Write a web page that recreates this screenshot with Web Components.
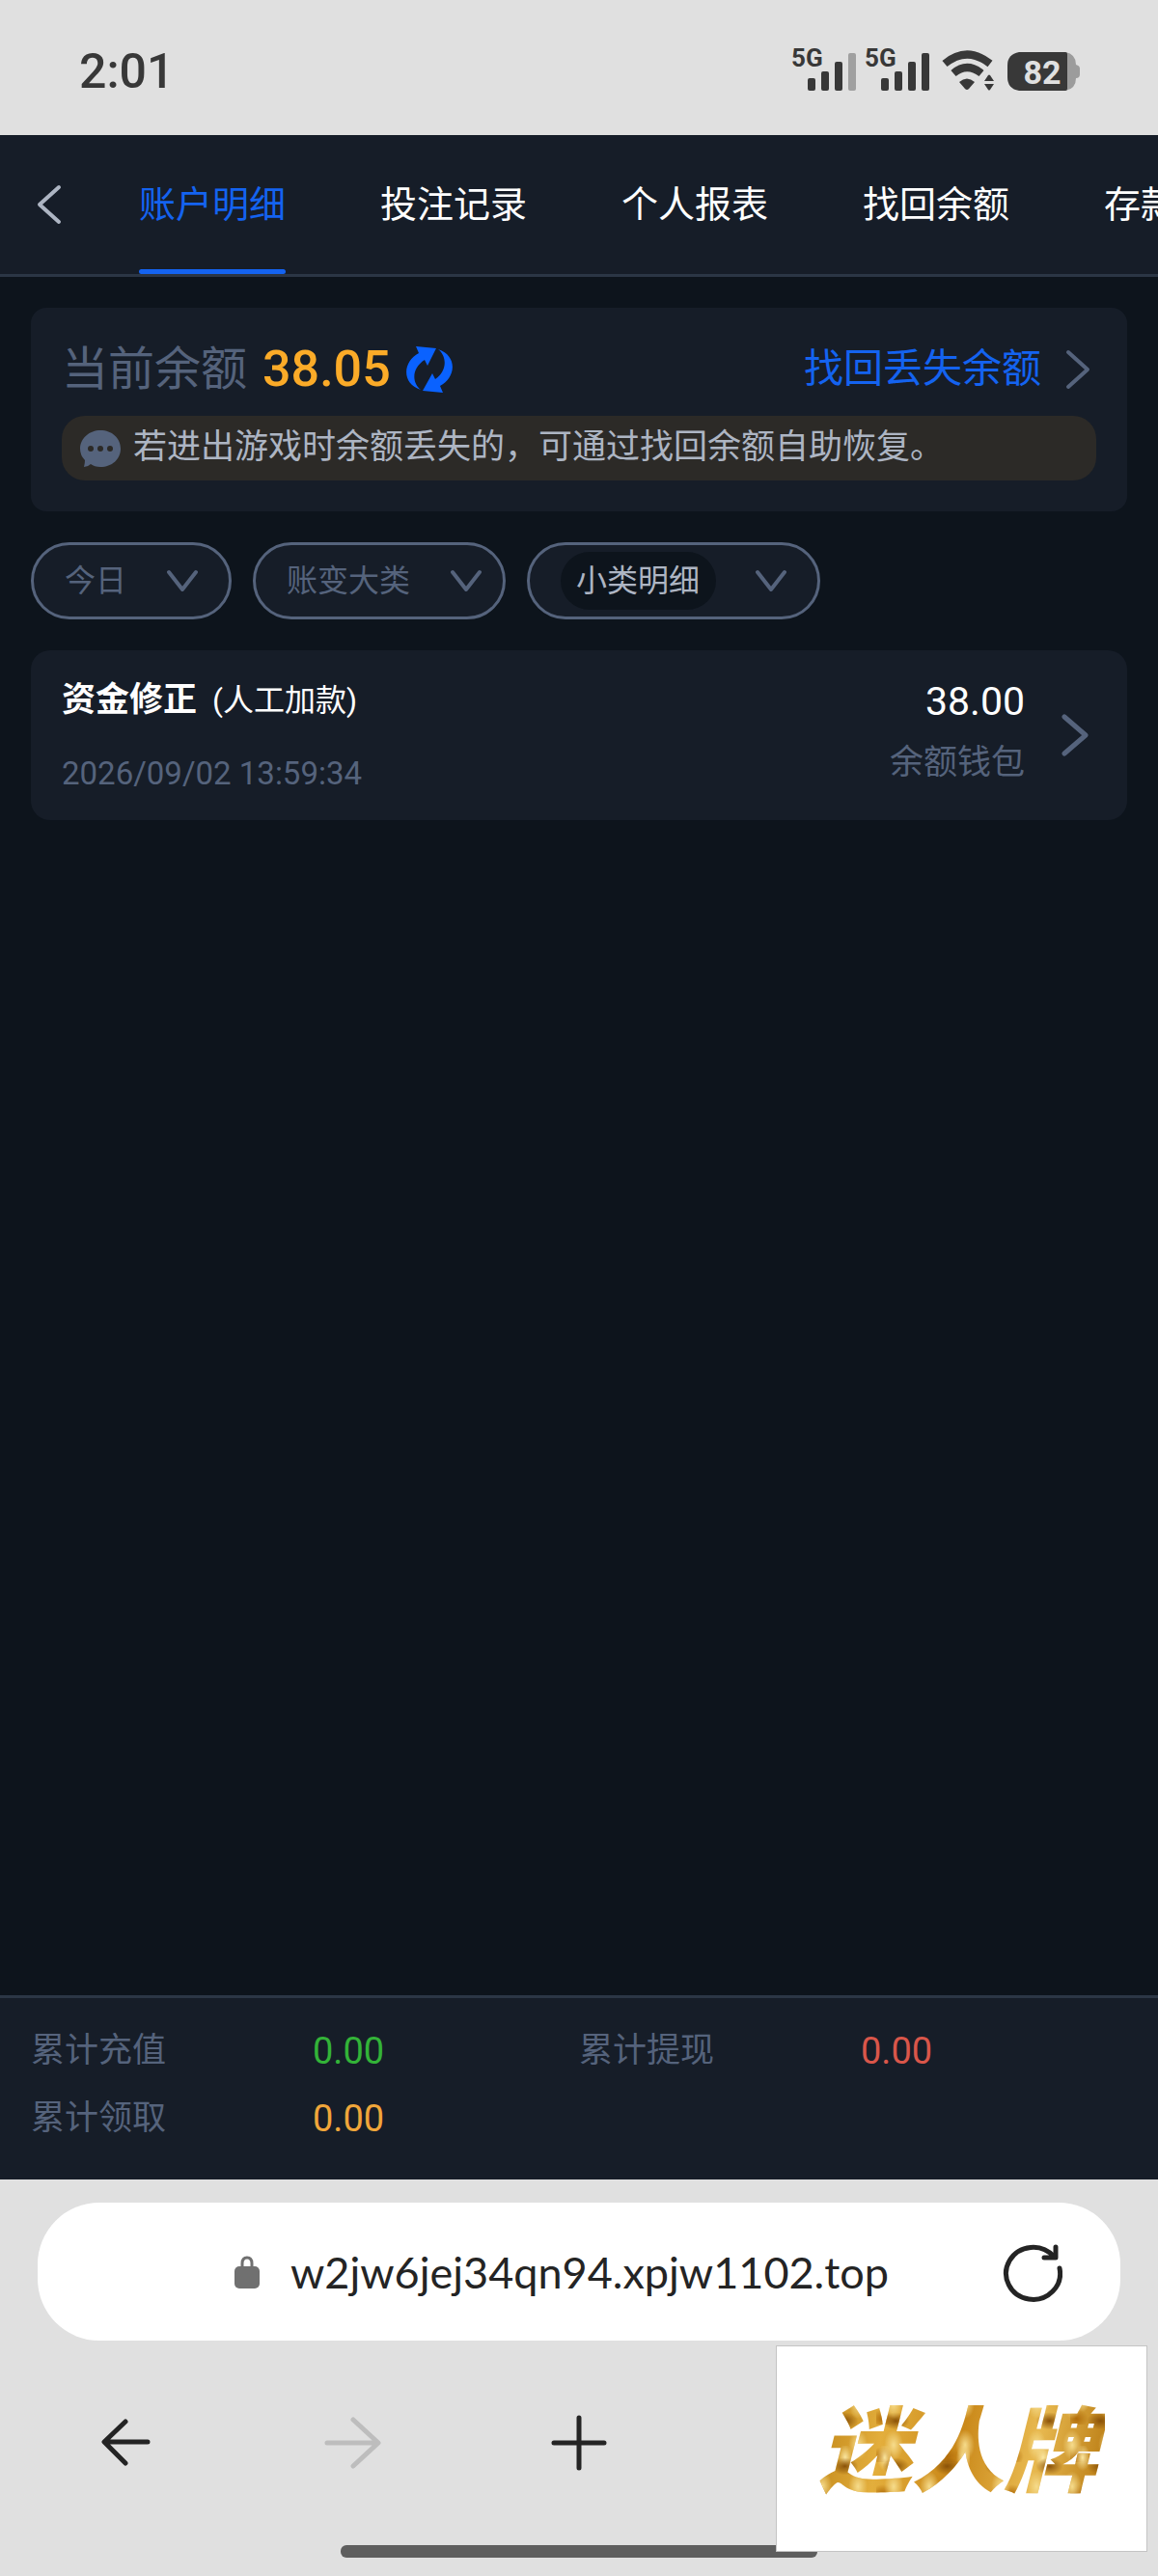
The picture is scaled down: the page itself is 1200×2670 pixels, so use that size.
<!DOCTYPE html>
<html lang="zh-CN">
<head>
<meta charset="utf-8">
<meta name="viewport" content="width=device-width, initial-scale=1">
<title>账户明细</title>
<style>
    :root {
        --page: #0d141c;
        --panel: #161d28;
        --line: #2b3645;
        --muted: #55637c;
        --soft: #adb5c3;
        --brand: #1463f0;
        --chrome: #e0e0e0;
        --ink: #242424;
    }

    body {
        margin: 0;
        background: var(--page);
        font-family: Roboto, "Noto Sans CJK SC", sans-serif;
        line-height: 1.5;
    }
</style>
</head>
<body>
<account-app>
    <status-bar slot="status" time="2:01" battery="82"></status-bar>
    <tab-nav slot="nav"></tab-nav>

    <balance-card amount="38.05">
        若进出游戏时余额丢失的，可通过找回余额自助恢复。
    </balance-card>
    <filter-bar>
        <filter-select label="今日"></filter-select>
        <filter-select label="账变大类" class="tight"></filter-select>
        <filter-select label="小类明细" class="chip"></filter-select>
    </filter-bar>
    <record-item kind="资金修正" note="(人工加款)" time="2026/09/02 13:59:34" amount="38.00" wallet="余额钱包"></record-item>

    <totals-bar slot="totals">
        <total-item label="累计充值" value="0.00" style="--value: #33b338"></total-item>
        <total-item label="累计提现" value="0.00" style="--value: #d9564a"></total-item>
        <total-item label="累计领取" value="0.00" style="--value: #f0a63a"></total-item>
    </totals-bar>
    <browser-bar slot="browser" host="w2jw6jej34qn94.xpjw1102.top">
        <brand-badge>迷人牌</brand-badge>
    </browser-bar>
</account-app>

<script>
class AccountApp extends HTMLElement {
    constructor() {
        super();
        this.attachShadow({ mode: 'open' });
        this.shadowRoot.innerHTML = `
            <style>
                :host {
                    display: flex;
                    flex-direction: column;
                    min-height: 100vh;
                }

                main {
                    flex: 1;
                    display: flex;
                    flex-direction: column;
                    gap: 32px;
                    padding: 32px;
                }
            </style>
            <slot name="status"></slot>
            <slot name="nav"></slot>
            <main><slot></slot></main>
            <slot name="totals"></slot>
            <slot name="browser"></slot>
        `;
    }
}

class SignalIcon extends HTMLElement {
    constructor() {
        super();
        this.attachShadow({ mode: 'open' });
    }

    connectedCallback() {
        const level = Number(this.getAttribute('level'));
        const tops = [31, 24, 14, 5];

        this.shadowRoot.innerHTML = `
            <style>
                :host {
                    display: block;
                    position: relative;
                    color: #383838;
                }

                span {
                    position: absolute;
                    top: 0;
                    left: 0;
                    font-size: 26px;
                    line-height: 20px;
                    font-weight: 700;
                }

                svg { display: block; }
            </style>
            <span>5G</span>
            <svg width="68" height="44" fill="currentColor" aria-hidden="true">
                ${tops.map((top, i) => `
                    <rect x="${17 + i * 14}" y="${top}" width="8" height="${44 - top}" rx="2" opacity="${i < level ? 1 : 0.38}"/>
                `).join('')}
            </svg>
        `;
    }
}

class StatusBar extends HTMLElement {
    constructor() {
        super();
        this.attachShadow({ mode: 'open' });
    }

    connectedCallback() {
        this.shadowRoot.innerHTML = `
            <style>
                :host {
                    display: flex;
                    justify-content: space-between;
                    align-items: center;
                    height: 140px;
                    padding: 4px 80px 0 82px;
                    box-sizing: border-box;
                    background: var(--chrome);
                    color: #383838;
                }

                time {
                    font-size: 50px;
                    font-weight: 500;
                    padding-top: 4px;
                }

                .icons {
                    display: flex;
                    align-items: flex-end;
                    gap: 8px;
                }

                .wifi { margin-left: 4px; }

                .battery {
                    position: relative;
                    width: 76px;
                    height: 40px;
                    margin-left: 4px;
                }

                .battery span {
                    position: absolute;
                    top: 0;
                    left: 0;
                    width: 72px;
                    text-align: center;
                    font-size: 34px;
                    line-height: 42px;
                    font-weight: 700;
                    color: var(--chrome);
                }

                svg { display: block; }
            </style>
            <time>${this.getAttribute('time')}</time>
            <div class="icons">
                <signal-icon level="3"></signal-icon>
                <signal-icon level="4"></signal-icon>
                <svg class="wifi" width="56" height="42" viewBox="0 0 56 42" fill="none" stroke="currentColor" aria-hidden="true">
                    <path d="M3 14Q26 -5 50 14" stroke-width="8"/>
                    <path d="M12 24Q26 12 41 24" stroke-width="8"/>
                    <path d="M18 33Q26 26 34 33L28 40Q26 42 24 40Z" fill="currentColor" stroke="none"/>
                    <path d="M44 32L48 26Q49 25 50 26L54 32ZM44 35L48 41Q49 42 50 41L54 35Z" fill="currentColor" stroke="none"/>
                </svg>
                <div class="battery">
                    <svg width="76" height="40" aria-hidden="true">
                        <path d="M60 0Q71 2 71 13Q75 14 75 17V23Q75 27 71 27Q71 38 60 40Z" fill="#9c9c9c"/>
                        <path d="M12 0H60Q62 0 62 2V38Q62 40 60 40H12Q0 38 0 26V14Q0 2 12 0Z" fill="#383838"/>
                    </svg>
                    <span>${this.getAttribute('battery')}</span>
                </div>
            </div>
        `;
    }
}

class TabNav extends HTMLElement {
    constructor() {
        super();
        this.attachShadow({ mode: 'open' });
        this.tabs = ['账户明细', '投注记录', '个人报表', '找回余额', '存款记录'];
        this.selected = 0;
        this.render();
    }

    connectedCallback() {
        const buttons = this.shadowRoot.querySelectorAll('[role=tab]');
        buttons.forEach(button => {
            button.addEventListener('click', () => {
                buttons.forEach(b => b.setAttribute('aria-selected', b === button));
            });
        });
    }

    render() {
        this.shadowRoot.innerHTML = `
            <style>
                :host {
                    display: flex;
                    height: 147px;
                    box-sizing: border-box;
                    border-bottom: 3px solid var(--line);
                    background: var(--panel);
                }

                button {
                    border: 0;
                    padding: 0;
                    background: none;
                    color: #fff;
                    font: inherit;
                    cursor: pointer;
                }

                .back {
                    flex: none;
                    width: 102px;
                    color: var(--soft);
                }

                .back svg { display: block; margin: 0 auto; }

                .tabs {
                    flex: 1;
                    display: flex;
                    gap: 98px;
                    padding-left: 42px;
                    overflow-x: auto;
                    scrollbar-width: none;
                }

                .tabs button {
                    flex: none;
                    position: relative;
                    font-size: 38px;
                    white-space: nowrap;
                }

                [aria-selected=true] { color: var(--brand); }

                [aria-selected=true]::after {
                    content: "";
                    position: absolute;
                    left: 0;
                    right: 0;
                    bottom: 0;
                    height: 5px;
                    border-radius: 3px;
                    background: var(--brand);
                }
            </style>
            <button class="back" aria-label="返回">
                <svg width="26" height="42" viewBox="0 0 26 42" fill="none" stroke="currentColor" stroke-width="4" stroke-linecap="round" stroke-linejoin="round">
                    <path d="M23 3L3 21L23 39"/>
                </svg>
            </button>
            <div class="tabs" role="tablist">
                ${this.tabs.map((name, i) => `
                    <button role="tab" aria-selected="${i === this.selected}">${name}</button>
                `).join('')}
            </div>
        `;
    }
}

class BalanceCard extends HTMLElement {
    constructor() {
        super();
        this.attachShadow({ mode: 'open' });
    }

    connectedCallback() {
        this.shadowRoot.innerHTML = `
            <style>
                :host {
                    display: block;
                    padding: 28px 32px 32px;
                    border-radius: 16px;
                    background: var(--panel);
                }

                .row {
                    display: flex;
                    align-items: center;
                    height: 72px;
                    margin-bottom: 12px;
                    font-size: 48px;
                    color: var(--muted);
                }

                strong {
                    margin: 0 16px;
                    font-size: 52px;
                    font-weight: 500;
                    color: #fbab28;
                }

                button {
                    border: 0;
                    padding: 0;
                    background: none;
                    color: #0a62ff;
                    cursor: pointer;
                }

                a {
                    display: flex;
                    align-items: center;
                    gap: 24px;
                    margin-left: auto;
                    margin-right: 5px;
                    font-size: 41px;
                    color: var(--brand);
                    text-decoration: none;
                }

                a svg { color: var(--muted); }

                svg { display: block; }

                .notice {
                    display: flex;
                    align-items: center;
                    gap: 12px;
                    min-height: 67px;
                    margin: 0;
                    padding: 0 19px;
                    border-radius: 24px;
                    background: #2c2a27;
                    font-size: 35px;
                    color: var(--soft);
                }
            </style>
            <div class="row">
                <span>当前余额</span>
                <strong>${this.getAttribute('amount')}</strong>
                <button aria-label="刷新余额">
                    <svg width="48" height="50" viewBox="0 0 48 50" fill="currentColor">
                        <path d="M10 1L31 3L22 21L19 15C5 24 6 39 15 46C-6 39 -3 16 13 8Z"/>
                        <path d="M38 49L17 47L27 29L30 35C43 26 42 11 33 4C54 11 51 34 35 42Z"/>
                    </svg>
                </button>
                <a href="#recover">找回丢失余额
                    <svg width="28" height="42" viewBox="0 0 28 42" fill="none" stroke="currentColor" stroke-width="4" stroke-linecap="round" stroke-linejoin="round" aria-hidden="true">
                        <path d="M4 3L24 21L4 39"/>
                    </svg>
                </a>
            </div>
            <p class="notice">
                <svg width="43" height="40" viewBox="0 0 43 40" aria-hidden="true">
                    <path d="M21 1C33 1 42 9 42 20S33 39 21 39Q15 39 11 36Q8 39 4 39Q5 35 5 32Q0 27 0 20C0 9 10 1 21 1Z" fill="#55637c"/>
                    <g fill="#2c2a27"><circle cx="11" cy="20" r="3"/><circle cx="21" cy="20" r="3"/><circle cx="31" cy="20" r="3"/></g>
                </svg>
                <slot></slot>
            </p>
        `;
    }
}

class FilterBar extends HTMLElement {
    constructor() {
        super();
        this.attachShadow({ mode: 'open' });
        this.shadowRoot.innerHTML = `
            <style>
                :host {
                    display: flex;
                    flex-wrap: wrap;
                    gap: 22px;
                }
            </style>
            <slot></slot>
        `;
    }
}

class FilterSelect extends HTMLElement {
    constructor() {
        super();
        this.attachShadow({ mode: 'open' });
    }

    connectedCallback() {
        const label = this.getAttribute('label');

        this.shadowRoot.innerHTML = `
            <style>
                :host {
                    display: block;
                    height: 80px;
                    padding: 0 32px;
                    box-sizing: border-box;
                    border: 3px solid var(--muted);
                    border-radius: 40px;
                    background: var(--panel);
                    color: var(--muted);
                }

                :host(.tight) { padding-right: 22px; }

                :host(.chip) select {
                    padding: 0 16px;
                    border-radius: 30px;
                    background: var(--page);
                    color: var(--soft);
                }

                label {
                    display: flex;
                    align-items: center;
                    gap: 41px;
                    height: 100%;
                }

                select {
                    appearance: none;
                    height: 60px;
                    padding: 0;
                    border: 0;
                    background: none;
                    color: inherit;
                    font: inherit;
                    font-size: 32px;
                }

                svg { display: block; }
            </style>
            <label>
                <select aria-label="${label}"><option>${label}</option></select>
                <svg width="32" height="24" viewBox="0 0 32 24" fill="none" stroke="currentColor" stroke-width="4" stroke-linecap="round" stroke-linejoin="round" aria-hidden="true">
                    <path d="M2 3L16 21L30 3"/>
                </svg>
            </label>
        `;
    }
}

class RecordItem extends HTMLElement {
    constructor() {
        super();
        this.attachShadow({ mode: 'open' });
    }

    connectedCallback() {
        const get = name => this.getAttribute(name);

        this.shadowRoot.innerHTML = `
            <style>
                :host {
                    display: flex;
                    align-items: center;
                    height: 176px;
                    box-sizing: border-box;
                    padding: 0 39px 0 32px;
                    border-radius: 20px;
                    background: var(--panel);
                    color: var(--muted);
                }

                .info, .sum {
                    display: flex;
                    flex-direction: column;
                    line-height: 48px;
                }

                .info {
                    gap: 28px;
                    padding-top: 4px;
                }

                .sum {
                    gap: 16px;
                    margin: 0 35px 0 auto;
                    padding-bottom: 6px;
                    text-align: right;
                    font-size: 35px;
                }

                .title {
                    display: flex;
                    gap: 16px;
                    font-size: 32px;
                    color: #fff;
                }

                .title b { font-size: 35px; }

                time { font-size: 33px; }

                .amount {
                    font-size: 41px;
                    color: #fff;
                }

                svg { display: block; }
            </style>
            <div class="info">
                <div class="title"><b>${get('kind')}</b><span>${get('note')}</span></div>
                <time>${get('time')}</time>
            </div>
            <div class="sum">
                <span class="amount">${get('amount')}</span>
                <span>${get('wallet')}</span>
            </div>
            <svg width="32" height="46" viewBox="0 0 32 46" fill="none" stroke="currentColor" stroke-width="5" stroke-linecap="round" stroke-linejoin="round" aria-hidden="true">
                <path d="M6 4L28 23L6 42"/>
            </svg>
        `;
    }
}

class TotalsBar extends HTMLElement {
    constructor() {
        super();
        this.attachShadow({ mode: 'open' });
        this.shadowRoot.innerHTML = `
            <style>
                :host {
                    display: grid;
                    grid-template-columns: 1fr 1fr;
                    row-gap: 18px;
                    padding: 29px 32px 37px;
                    border-top: 3px solid var(--line);
                    background: var(--panel);
                }
            </style>
            <slot></slot>
        `;
    }
}

class TotalItem extends HTMLElement {
    constructor() {
        super();
        this.attachShadow({ mode: 'open' });
    }

    connectedCallback() {
        this.shadowRoot.innerHTML = `
            <style>
                :host {
                    display: grid;
                    grid-template-columns: 1fr 1fr;
                    font-size: 35px;
                    line-height: 52px;
                    color: var(--muted);
                }

                output {
                    padding-left: 8px;
                    font-size: 38px;
                    color: var(--value);
                }
            </style>
            <label for="value">${this.getAttribute('label')}</label>
            <output id="value">${this.getAttribute('value')}</output>
        `;
    }
}

class BrowserBar extends HTMLElement {
    constructor() {
        super();
        this.attachShadow({ mode: 'open' });
    }

    connectedCallback() {
        this.shadowRoot.innerHTML = `
            <style>
                :host {
                    display: block;
                    position: relative;
                    padding: 24px 0 19px;
                    background: var(--chrome);
                    color: var(--ink);
                }

                .address {
                    display: flex;
                    align-items: center;
                    height: 143px;
                    margin: 0 39px;
                    padding: 0 60px;
                    box-sizing: border-box;
                    border-radius: 64px;
                    background: #fff;
                }

                .url {
                    flex: 1;
                    display: flex;
                    justify-content: center;
                    align-items: center;
                    gap: 32px;
                    padding-left: 26px;
                    font: 45px Lato, "Noto Sans CJK SC", sans-serif;
                }

                nav {
                    display: grid;
                    grid-template-columns: repeat(5, 1fr);
                    margin: 76px 14px;
                }

                button {
                    display: grid;
                    place-items: center;
                    padding: 0;
                    border: 0;
                    background: none;
                    color: inherit;
                    cursor: pointer;
                }

                button:disabled { color: #bdbdbd; }

                svg { display: block; }

                .home {
                    width: 494px;
                    height: 13px;
                    margin: 0 auto;
                    border-radius: 6px;
                    background: #5e5e5e;
                }

                ::slotted(*) {
                    position: absolute;
                    right: 11px;
                    bottom: 25px;
                }
            </style>
            <div class="address">
                <div class="url">
                    <svg width="26" height="34" viewBox="0 0 26 34" aria-hidden="true">
                        <rect y="11" width="26" height="23" rx="5" fill="#707070"/>
                        <path d="M8 13V8Q8 2 13 2T18 8V13" fill="none" stroke="#707070" stroke-width="3"/>
                    </svg>
                    <span>${this.getAttribute('host')}</span>
                </div>
                <button aria-label="刷新">
                    <svg width="62" height="62" viewBox="0 0 62 62" fill="none" stroke="currentColor" stroke-width="5" stroke-linecap="round" stroke-linejoin="round">
                        <path d="M59 27A28 27 0 1 1 53 15M55 5V16H43"/>
                    </svg>
                </button>
            </div>
            <nav>
                <button aria-label="后退">
                    <svg width="60" height="60" viewBox="0 0 60 60" fill="none" stroke="currentColor" stroke-width="5" stroke-linecap="round" stroke-linejoin="round">
                        <path d="M52 29H8M29 8L7 29L29 51"/>
                    </svg>
                </button>
                <button aria-label="前进" disabled>
                    <svg width="60" height="60" viewBox="0 0 60 60" fill="none" stroke="currentColor" stroke-width="5" stroke-linecap="round" stroke-linejoin="round">
                        <path d="M3 30H55M30 6L56 30L30 54"/>
                    </svg>
                </button>
                <button aria-label="新建标签页">
                    <svg width="60" height="60" viewBox="0 0 60 60" fill="none" stroke="currentColor" stroke-width="5" stroke-linecap="round">
                        <path d="M4 30H56M30 4V56"/>
                    </svg>
                </button>
            </nav>
            <div class="home"></div>
            <slot></slot>
        `;
    }
}

class BrandBadge extends HTMLElement {
    constructor() {
        super();
        this.attachShadow({ mode: 'open' });
        this.shadowRoot.innerHTML = `
            <style>
                :host {
                    display: grid;
                    place-items: center;
                    width: 385px;
                    height: 214px;
                    padding: 0 8px 8px 0;
                    box-sizing: border-box;
                    border: 1px solid #c4c4c4;
                    background: #fff;
                }

                /* uneven gold leaf, clipped to the letters */
                span {
                    padding: 0 8px;
                    font: italic 900 96px/120px "Noto Sans CJK SC", sans-serif;
                    color: transparent;
                    background:
                        radial-gradient(ellipse 10px 16px at 30% 40%, #f6dc8c, transparent),
                        radial-gradient(ellipse 14px 9px at 65% 75%, #8a5208, transparent),
                        radial-gradient(ellipse 8px 14px at 85% 20%, #fae6a0, transparent),
                        radial-gradient(ellipse 12px 10px at 10% 85%, #b06c0a, transparent),
                        linear-gradient(100deg, #bd8215, #e3ae3c 25%, #c98718 50%, #e8b950 75%, #b87a12);
                    background-size: 37px 43px, 53px 47px, 41px 61px, 67px 39px, 100% 100%;
                    -webkit-background-clip: text;
                    background-clip: text;
                }
            </style>
            <span><slot></slot></span>
        `;
    }
}

customElements.define('account-app', AccountApp);
customElements.define('signal-icon', SignalIcon);
customElements.define('status-bar', StatusBar);
customElements.define('tab-nav', TabNav);
customElements.define('balance-card', BalanceCard);
customElements.define('filter-bar', FilterBar);
customElements.define('filter-select', FilterSelect);
customElements.define('record-item', RecordItem);
customElements.define('totals-bar', TotalsBar);
customElements.define('total-item', TotalItem);
customElements.define('browser-bar', BrowserBar);
customElements.define('brand-badge', BrandBadge);
</script>
</body>
</html>
